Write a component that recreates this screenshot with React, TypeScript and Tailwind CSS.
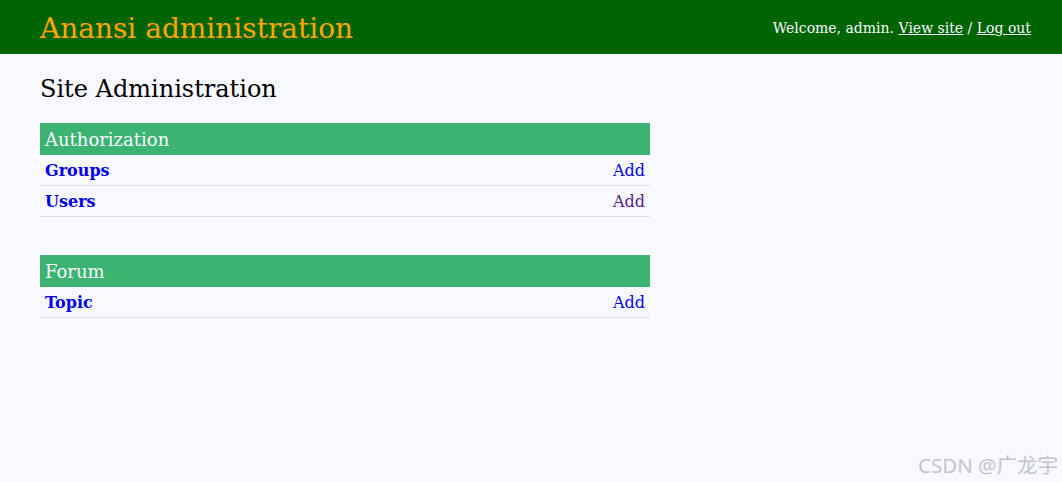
import React from "react";

type Model = { name: string; visited?: boolean };
type Section = { title: string; models: Model[] };

const sections: Section[] = [
	{ title: "Authorization", models: [{ name: "Groups" }, { name: "Users", visited: true }] },
	{ title: "Forum", models: [{ name: "Topic" }] },
];

export default function App() {
	return (
		<div className="relative min-h-[482px] bg-[#f8f8ff] font-['DejaVu_Serif',serif] text-black">
			{/* header */}
			<div className="flex h-[54px] items-center justify-between bg-[#006400] pl-10 pr-[31px] pt-[3px]">
				<span className="text-[28px] leading-none text-[#ffa500]">Anansi administration</span>
				<span className="text-[14px] text-[#f8f8ff]">
					Welcome, admin. <a className="underline">View site</a> / <a className="underline">Log out</a>
				</span>
			</div>

			<div className="px-10 pt-[19px]">
				<h1 className="text-[24px] leading-[32px]">Site Administration</h1>

				<div className="mt-[18px] flex w-[610px] flex-col gap-[38px]">
					{sections.map((s) => (
						<div key={s.title}>
							<div className="flex h-8 items-center bg-[#3cb371] px-[5px] text-[18px] text-[#f8f8ff]">
								{s.title}
							</div>
							{s.models.map((m) => (
								<div
									key={m.name}
									className="flex h-[31px] items-center justify-between border-b border-[#dcdce0] px-[5px] pt-[1px] text-[16px]"
								>
									<a className="font-bold text-[#0000ee]">{m.name}</a>
									<a className={m.visited ? "text-[#551a8b]" : "text-[#0000ee]"}>Add</a>
								</div>
							))}
						</div>
					))}
				</div>
			</div>

			<span className="absolute bottom-[1px] right-[4px] font-['Noto_Sans','Noto_Sans_CJK_SC',sans-serif] text-[20.5px] text-[#c4c4c8]">
				CSDN @广龙宇
			</span>
		</div>
	);
}
